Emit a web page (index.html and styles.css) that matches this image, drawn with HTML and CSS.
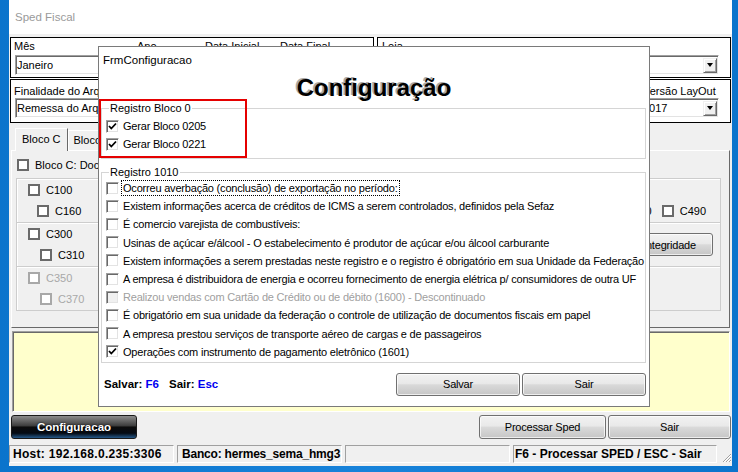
FILE: index.html
```html
<!DOCTYPE html>
<html lang="pt-BR">
<head>
  <meta charset="UTF-8">
  <title>Sped Fiscal</title>
  <link rel="stylesheet" href="styles.css">
</head>
<body>
<div class="desktop">

  <div class="window">
    <div class="titlebar">Sped Fiscal</div>

    <div class="params">
      <div class="param-row">
        <div class="pbox periodo">
          <div class="field f-mes">
            <div class="lbl">Mês</div>
            <div class="combo"><span>Janeiro</span><i class="drop"></i></div>
          </div>
          <div class="field f-ano">
            <div class="lbl">Ano</div>
            <div class="edit"></div>
          </div>
          <div class="field f-ini">
            <div class="lbl">Data Inicial</div>
            <div class="edit"></div>
          </div>
          <div class="field f-fim">
            <div class="lbl">Data Final</div>
            <div class="edit"></div>
          </div>
        </div>
        <div class="pbox loja">
          <div class="field grow">
            <div class="lbl">Loja</div>
            <div class="combo"><span></span><i class="drop"></i></div>
          </div>
        </div>
      </div>
      <div class="pbox finalidade">
        <div class="field f-final">
          <div class="lbl">Finalidade do Arquivo</div>
          <div class="combo"><span>Remessa do Arquivo Original</span><i class="drop"></i></div>
        </div>
        <div class="field f-versao">
          <div class="lbl">Versão LayOut</div>
          <div class="combo"><span>2017</span><i class="drop"></i></div>
        </div>
      </div>
    </div>

    <div class="tabs">
      <div class="tabstrip">
        <div class="tab active">Bloco C</div>
        <div class="tab">Bloco D</div>
      </div>
      <div class="tabpage">
        <div class="mchk top"><span class="mbox"></span>Bloco C: Documentos Fiscais I</div>

        <div class="grp">
          <div class="grp-rows">
            <div class="mchk"><span class="mbox"></span>C100</div>
            <div class="sub">
              <div class="mchk"><span class="mbox"></span>C160</div>
              <div class="mchk"><span class="mbox"></span></div>
              <div class="sub-right">
                <div class="mchk"><span class="mbox"></span>C480</div>
                <div class="mchk"><span class="mbox"></span>C490</div>
              </div>
            </div>
          </div>
        </div>

        <div class="grp">
          <div class="grp-rows">
            <div class="mchk"><span class="mbox"></span>C300</div>
            <div class="sub wide">
              <div class="mchk"><span class="mbox"></span>C310</div>
              <div class="mchk"><span class="mbox"></span></div>
            </div>
          </div>
          <button class="btn btn-integ">Integridade</button>
        </div>

        <div class="grp off">
          <div class="grp-rows">
            <div class="mchk"><span class="mbox"></span>C350</div>
            <div class="sub wide">
              <div class="mchk"><span class="mbox"></span>C370</div>
              <div class="mchk"><span class="mbox"></span></div>
            </div>
          </div>
        </div>
      </div>
    </div>

    <div class="memo"></div>

    <div class="actions">
      <button class="btn-dark">Configuracao</button>
      <button class="btn btn-proc">Processar Sped</button>
      <button class="btn btn-exit">Sair</button>
    </div>

    <div class="statusbar">
      <div class="panel">Host: 192.168.0.235:3306</div>
      <div class="panel">Banco: hermes_sema_hmg3</div>
      <div class="panel"></div>
      <div class="panel last">F6 - Processar SPED / ESC - Sair</div>
      <svg class="grip" width="12" height="12" viewBox="0 0 12 12">
        <path d="M11 3 L3 11 M11 6 L6 11 M11 9 L9 11" stroke="#a0a0a0" stroke-width="1"/>
        <path d="M11 4 L4 11 M11 7 L7 11 M11 10 L10 11" stroke="#fff" stroke-width="1"/>
      </svg>
    </div>
  </div>

  <!-- janela de configuração aberta por cima -->
  <div class="dialog">
    <div class="dlg-title">FrmConfiguracao</div>
    <div class="dlg-heading">Configuração</div>

    <fieldset class="fs fs-bloco0">
      <legend>Registro Bloco 0</legend>
      <div class="opt"><span class="cb on"><svg width="9" height="9" viewBox="0 0 9 9"><path d="M1 4 L3.3 6.5 L8 1.5" fill="none" stroke="#000" stroke-width="1.8"/></svg></span>Gerar Bloco 0205</div>
      <div class="opt"><span class="cb on"><svg width="9" height="9" viewBox="0 0 9 9"><path d="M1 4 L3.3 6.5 L8 1.5" fill="none" stroke="#000" stroke-width="1.8"/></svg></span>Gerar Bloco 0221</div>
    </fieldset>

    <fieldset class="fs fs-1010">
      <legend>Registro 1010</legend>
      <div class="opt"><span class="cb"></span><span class="focus">Ocorreu averbação (conclusão) de exportação no período:</span></div>
      <div class="opt"><span class="cb"></span>Existem informações acerca de créditos de ICMS a serem controlados, definidos pela Sefaz</div>
      <div class="opt"><span class="cb"></span>É comercio varejista de combustíveis:</div>
      <div class="opt"><span class="cb"></span>Usinas de açúcar e/álcool - O estabelecimento é produtor de açúcar e/ou álcool carburante</div>
      <div class="opt"><span class="cb"></span>Existem informações a serem prestadas neste registro e o registro é obrigatório em sua Unidade da Federação</div>
      <div class="opt"><span class="cb"></span>A empresa é distribuidora de energia e ocorreu fornecimento de energia elétrica p/ consumidores de outra UF</div>
      <div class="opt disabled"><span class="cb"></span>Realizou vendas com Cartão de Crédito ou de débito (1600) - Descontinuado</div>
      <div class="opt"><span class="cb"></span>É obrigatório em sua unidade da federação o controle de utilização de documentos fiscais em papel</div>
      <div class="opt"><span class="cb"></span>A empresa prestou serviços de transporte aéreo de cargas e de passageiros</div>
      <div class="opt"><span class="cb on"><svg width="9" height="9" viewBox="0 0 9 9"><path d="M1 4 L3.3 6.5 L8 1.5" fill="none" stroke="#000" stroke-width="1.8"/></svg></span>Operações com instrumento de pagamento eletrônico (1601)</div>
    </fieldset>

    <div class="dlg-foot">
      <span class="key">Salvar: <em>F6</em></span>
      <span class="key">Sair: <em>Esc</em></span>
      <button class="btn btn-save">Salvar</button>
      <button class="btn btn-quit">Sair</button>
    </div>

    <div class="highlight"></div>
  </div>

</div>
</body>
</html>
```

FILE: styles.css
```css
* {
  box-sizing: border-box;
}

body {
  margin: 0;
  font-family: "Liberation Sans", Arial, sans-serif;
  font-size: 11px;
  color: #000;
}

.desktop {
  position: relative;
  width: 738px;
  height: 472px;
  overflow: hidden;
  padding-left: 9px;
  background: linear-gradient(90deg, #0b74cc, #1883da 50%, #0b74cc);
}

.window {
  width: 723px;
  height: 466px;
  background: #f0f0f0;
  display: flex;
  flex-direction: column;
}

.titlebar {
  height: 34px;
  line-height: 34px;
  padding-left: 6px;
  background: #fff;
  color: #9a9a9a;
  font-size: 11.5px;
}

/* parametros */

.params {
  margin: 3px 1px 0;
  background: #fff;
}

.param-row {
  display: flex;
  gap: 3px;
}

.pbox {
  display: flex;
  border: 1px solid #000;
  background: #fff;
}

.periodo {
  width: 364px;
  padding: 1px 0 2px 3px;
}

.loja {
  flex: 1;
  padding: 1px 11px 2px 4px;
}

.loja .combo {
  margin-left: -1px;
}

.finalidade {
  margin-top: 1px;
  padding: 4px 11px 4px 3px;
  justify-content: space-between;
}

.field {
  display: flex;
  flex-direction: column;
}

.grow {
  flex: 1;
}

.f-mes { width: 123px; }
.f-ano { width: 68px; }
.f-ini { width: 75px; }
.f-fim { width: 90px; }
.f-final { width: 340px; }
.f-versao { width: 78px; }

.f-mes .combo { width: 116px; margin-left: 1px; }
.f-final .combo { margin-left: 1px; }
.f-versao .lbl { padding-left: 2px; }

.lbl {
  height: 14px;
  line-height: 14px;
  white-space: nowrap;
}

.combo,
.edit {
  display: flex;
  align-items: center;
  height: 20px;
  margin-top: 2px;
  padding-left: 1px;
  background: #fff;
  border: 1px solid;
  border-color: #a0a0a0 #fff #fff #a0a0a0;
  box-shadow: inset 1px 1px #696969, inset -1px -1px #e3e3e3;
  font-size: 11px;
  white-space: nowrap;
  overflow: hidden;
}

.finalidade .combo {
  margin-top: 0;
}

.edit {
  width: 62px;
}

.drop {
  display: flex;
  align-items: center;
  justify-content: center;
  width: 14px;
  height: 15px;
  margin-left: auto;
  margin-right: 1px;
  background: #f0f0f0;
  border: 1px solid;
  border-color: #f0f0f0 #696969 #696969 #f0f0f0;
  box-shadow: inset 1px 1px #fff, inset -1px -1px #a0a0a0;
}

.drop::after {
  content: "";
  border-left: 3px solid transparent;
  border-right: 3px solid transparent;
  border-top: 4px solid #000;
}

/* abas */

.tabs {
  margin: 3px 2px 0 2px;
}

.tabstrip {
  display: flex;
  align-items: flex-end;
  height: 24px;
  padding-left: 4px;
}

.tab {
  height: 20px;
  line-height: 19px;
  padding: 0 5px;
  border: 1px solid;
  border-color: #fff #696969 transparent #fff;
  border-bottom: none;
}

.tab.active {
  height: 23px;
  line-height: 21px;
  padding: 0 6px;
  margin-bottom: -1px;
  position: relative;
  background: #f0f0f0;
}

.tabpage {
  height: 178px;
  padding: 5px 8px 0 4px;
  border: 1px solid;
  border-color: #fff #696969 #696969 #fff;
}

.mchk {
  display: flex;
  align-items: center;
  gap: 6px;
  height: 14px;
  white-space: nowrap;
}

.mchk.top {
  margin: 2px 0 6px 1px;
}

.mbox {
  width: 12px;
  height: 12px;
  border: 2px solid #6a6a6a;
  background: #fff;
}

.grp {
  display: flex;
  align-items: center;
  height: 45px;
  padding: 0 7px 0 11px;
  border: 1px solid #cdcdcd;
  box-shadow: inset 1px 1px #fff;
}

.grp + .grp {
  margin-top: -1px;
}

.grp-rows {
  flex: 1;
  display: flex;
  flex-direction: column;
  gap: 7px;
}

.sub {
  display: flex;
  gap: 21px;
  padding-left: 9px;
}

.sub.wide {
  gap: 14px;
  padding-left: 12px;
}

.sub-right {
  display: flex;
  gap: 10px;
  margin-left: auto;
  margin-right: 7px;
}

.grp.off {
  color: #a8a8a8;
}

.grp.off .mbox {
  border-color: #a8a8a8;
}

/* botoes */

.btn {
  height: 23px;
  padding: 0;
  font-family: "Liberation Sans", Arial, sans-serif;
  font-size: 11px;
  letter-spacing: -0.2px;
  color: #000;
  border: 1px solid #707070;
  border-radius: 3px;
  background: linear-gradient(#f2f2f2 0%, #e9e9e9 45%, #d9d9d9 52%, #c6c6c6 100%);
  box-shadow: inset 0 0 0 1px rgba(255, 255, 255, 0.7);
}

.btn-integ {
  width: 87px;
  flex: none;
}

.memo {
  height: 81px;
  margin: 3px 2px 0 3px;
  background: #ffffcc;
  border: 1px solid;
  border-color: #a0a0a0 #fff #fff #a0a0a0;
  box-shadow: inset 1px 1px #696969;
}

.actions {
  display: flex;
  gap: 2px;
  height: 24px;
  margin-top: 3px;
  padding: 0 1px;
}

.btn-dark {
  width: 126px;
  height: 24px;
  margin-left: 1px;
  padding: 0;
  font-family: "Liberation Sans", Arial, sans-serif;
  font-size: 11.5px;
  font-weight: bold;
  color: #fff;
  text-shadow: 0 0 2px #000;
  border: 1px solid #1a1a1a;
  border-radius: 3px;
  background: linear-gradient(#8c8c8c 0%, #3c3c3c 45%, #0c0c0c 50%, #050b14 78%, #24598a 100%);
}

.btn-proc {
  width: 127px;
  height: 24px;
  margin-left: auto;
}

.btn-exit {
  width: 123px;
  height: 24px;
}

/* barra de status */

.statusbar {
  display: flex;
  align-items: flex-end;
  gap: 3px;
  height: 18px;
  margin-top: 6px;
}

.panel {
  width: 165px;
  height: 18px;
  line-height: 16px;
  padding-left: 3px;
  border: 1px solid;
  border-color: #a0a0a0 #fff #fff #a0a0a0;
  font-size: 12px;
  font-weight: bold;
  white-space: nowrap;
  overflow: hidden;
}

.panel:first-child {
  letter-spacing: 0.3px;
}

.panel:nth-child(2) {
  padding-left: 4px;
  letter-spacing: -0.2px;
}

.panel.last {
  flex: 1;
  width: auto;
  padding-left: 1px;
}

.grip {
  flex: none;
}

/* dialogo */

.dialog {
  position: absolute;
  left: 98px;
  top: 46px;
  width: 552px;
  height: 361px;
  background: #fff;
  border: 1px solid #7a7a7a;
}

.dlg-title {
  height: 27px;
  line-height: 27px;
  padding-left: 4px;
  font-size: 11.5px;
}

.dlg-heading {
  height: 27px;
  line-height: 27px;
  text-align: center;
  font-size: 24px;
  font-weight: bold;
  text-shadow: -2px -1px 0 #a9a9a9;
}

.fs {
  margin: 0 3px 0 2px;
  padding: 2px 0 5px 4px;
  border: 1px solid #d5d5d5;
  min-width: 0;
}

.fs legend {
  margin-left: 3px;
  padding: 0 1px;
  line-height: 14px;
  font-size: 11px;
}

.fs-1010 {
  margin-top: 6px;
  padding: 0 0 1px 4px;
}

.opt {
  display: flex;
  align-items: center;
  gap: 4px;
  height: 18px;
  white-space: nowrap;
  letter-spacing: -0.2px;
}

.fs-1010 .opt {
  height: 18.2px;
}

.cb {
  display: flex;
  align-items: center;
  justify-content: center;
  flex: none;
  width: 13px;
  height: 13px;
  background: #fff;
  border: 1px solid;
  border-color: #a0a0a0 #fff #fff #a0a0a0;
  box-shadow: inset 1px 1px #696969, inset -1px -1px #e3e3e3;
}

.opt.disabled {
  color: #a0a0a0;
}

.opt.disabled .cb {
  background: #f0f0f0;
}

.focus {
  margin-left: -1px;
  padding: 1px;
  outline: 1px dotted #000;
}

.dlg-foot {
  display: flex;
  align-items: center;
  gap: 10px;
  height: 23px;
  margin: 10px 3px 0 5px;
}

.key {
  font-size: 11.5px;
  font-weight: bold;
}

.key em {
  font-style: normal;
  color: #0000f0;
}

.btn-save {
  width: 124px;
  margin-left: auto;
}

.btn-quit {
  width: 124px;
  margin-left: -8px;
}

.highlight {
  position: absolute;
  left: 0;
  top: 52px;
  width: 148px;
  height: 59px;
  border: 2px solid #e50000;
}
```
